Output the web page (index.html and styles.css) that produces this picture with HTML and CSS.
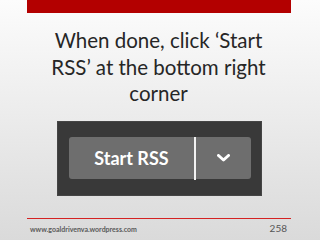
FILE: index.html
```html
<!DOCTYPE html>
<html>
<head>
<meta charset="utf-8">
<link rel="stylesheet" href="styles.css">
</head>
<body>
<div class="slide">
  <div class="topbar"></div>
  <h1 class="title">When done, click ‘Start<br>RSS’ at the bottom right<br>corner</h1>
  <div class="panel">
    <div class="btn">
      <div class="btn-main">Start RSS</div>
      <div class="btn-divider"></div>
      <div class="btn-drop">
        <svg width="13" height="8" viewBox="0 0 13 8"><path d="M1.5 1.5 L6.5 6 L11.5 1.5" fill="none" stroke="#ffffff" stroke-width="3" stroke-linecap="round" stroke-linejoin="round"/></svg>
      </div>
    </div>
  </div>
  <div class="footer">
    <span class="url">www.goaldrivenva.wordpress.com</span>
    <span class="page">258</span>
  </div>
</div>
</body>
</html>
```
FILE: styles.css
```css
* { box-sizing: border-box; }
html, body { margin: 0; padding: 0; }
body { width: 320px; height: 240px; overflow: hidden; }
.slide {
  width: 320px;
  height: 240px;
  background: linear-gradient(#fcfcfc, #dadada);
  display: flex;
  flex-direction: column;
  font-family: Lato, "Open Sans", sans-serif;
}
.topbar {
  height: 13px;
  margin: 0 29px 0 27px;
  background: #b30000;
}
.title {
  margin: 14px 13px 0 10px;
  font-weight: 400;
  font-size: 20.5px;
  line-height: 26.5px;
  text-align: center;
  color: #262626;
  white-space: nowrap;
}
.panel {
  width: 205px;
  height: 75px;
  margin: 14px 0 0 57px;
  background: #393939;
  border: 1px solid #454545;
  padding: 15px 0 0 11px;
}
.btn {
  width: 182px;
  height: 42px;
  display: flex;
  background: #6e6e6e;
  border-radius: 3px;
}
.btn-main {
  width: 125px;
  display: flex;
  align-items: center;
  justify-content: center;
  color: #ffffff;
  font-weight: 700;
  font-size: 18px;
  padding-top: 1px;
}
.btn-divider {
  width: 2px;
  background: #f2f2f2;
  margin-bottom: -1px;
}
.btn-drop {
  flex: 1;
  display: flex;
  align-items: center;
  justify-content: center;
}
.footer {
  margin: 22px 29px 0 27px;
  border-top: 1px solid #d42222;
  display: flex;
  justify-content: space-between;
  align-items: baseline;
  padding: 3px 4px 0 3px;
  color: #555555;
}
.url { font-size: 7px; font-weight: 700; color: #5a5a5a; }
.page { font-size: 10px; color: #555555; }
```
